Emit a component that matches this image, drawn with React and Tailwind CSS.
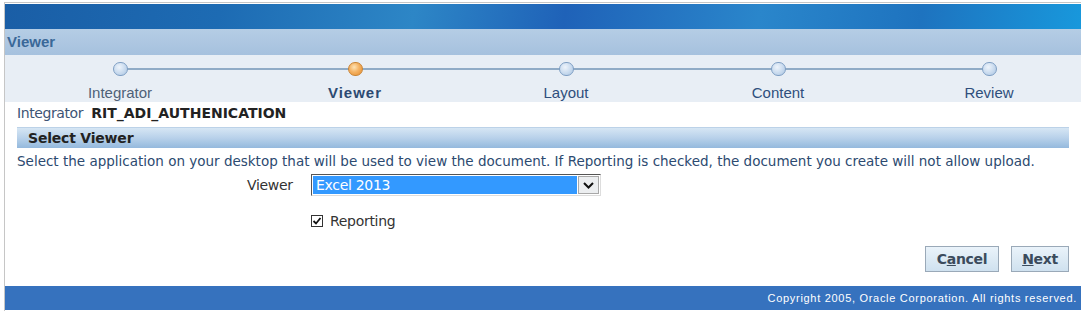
import React from "react";

const tahoma = { fontFamily: '"DejaVu Sans", Verdana, sans-serif' };

function Circle({ active }) {
  return active ? (
    <div className="w-[15px] h-[15px] rounded-full border border-[#c98536] bg-[radial-gradient(circle_at_40%_35%,#fde3b5_0%,#f4b263_45%,#e58c2c_100%)] relative z-10" />
  ) : (
    <div className="w-[15px] h-[15px] rounded-full border border-[#7f9fc4] bg-[radial-gradient(circle_at_40%_35%,#eef4fb_0%,#c8daee_55%,#a9c3e0_100%)] relative z-10" />
  );
}

function Step({ label, active, dim, className }) {
  return (
    <div className={`w-[150px] flex flex-col items-center ${className}`}>
      <Circle active={active} />
      <div
        className={`mt-[8px] text-[15px] leading-[18px] font-['Liberation_Sans',Arial,sans-serif] ${
          active
            ? "font-bold text-[#2c4a72] tracking-[1px]"
            : dim
            ? "text-[#4f6178]"
            : "text-[#2f4e7c]"
        }`}
      >
        {label}
      </div>
    </div>
  );
}

export default function App() {
  return (
    <div className="w-[1085px] h-[314px] bg-white overflow-hidden">
      <div className="mt-[2px] ml-[4px] w-[1077px] border-t border-l border-[#c6c6c6] h-[309px] flex flex-col">
        <div className="h-[1px] bg-white" />
        {/* banner */}
        <div className="h-[25px] bg-[linear-gradient(100deg,#1a5ea6_0%,#1d6bb3_20%,#2d86c6_38%,#1f62b8_52%,#2a86cb_70%,#1e73bf_85%,#1898dc_100%)]" />
        {/* title */}
        <div className="h-[26px] bg-[linear-gradient(180deg,#b5cde5_0%,#a6c1de_100%)] flex items-center pl-[2px]">
          <span className="text-[15px] font-bold text-[#3a6898] font-['Liberation_Sans',Arial,sans-serif]">Viewer</span>
        </div>
        {/* train */}
        <div className="h-[47px] bg-[#e8eef5] relative pt-[7px] flex">
          <div className="absolute left-[116px] w-[870px] top-[13px] h-[2px] bg-[#90abc6]" />
          <Step label="Integrator" dim className="ml-[40px]" />
          <Step label="Viewer" active className="ml-[85px]" />
          <Step label="Layout" className="ml-[61px]" />
          <Step label="Content" className="ml-[62px]" />
          <Step label="Review" className="ml-[61px]" />
        </div>
        {/* integrator row */}
        <div className="h-[22px] flex items-center pl-[12px] text-[14px]" style={tahoma}>
          <span className="text-[#3d5474] tracking-[-0.4px]">Integrator</span>
          <span className="ml-[8px] font-bold text-[#222] tracking-[0px]">RIT_ADI_AUTHENICATION</span>
        </div>
        <div className="mt-[3px] ml-[12px] w-[1052px] h-[21px] bg-[linear-gradient(180deg,#d6e6f4_0%,#b8d1ea_50%,#94b9dd_100%)] border-t border-[#bcd2e8] flex items-center pl-[11px]">
          <span className="text-[14px] font-bold text-[#222] tracking-[-0.2px]" style={tahoma}>Select Viewer</span>
        </div>
        <div className="ml-[12px] mt-[3px] h-[20px] text-[13.5px] leading-[20px] text-[#2c4a70] tracking-[0px] whitespace-nowrap" style={tahoma}>
          Select the application on your desktop that will be used to view the document. If Reporting is checked, the document you create will not allow upload.
        </div>
        {/* viewer select */}
        <div className="mt-[3px] flex items-center h-[22px]">
          <span className="ml-[242px] w-[50px] text-[14px] text-[#333] tracking-[-0.3px]" style={tahoma}>Viewer</span>
          <div className="ml-[14px] w-[290px] h-[22px] border border-[#555] border-r-[#ddd] border-b-[#ddd] bg-white flex items-stretch p-[1px]">
            <div className="flex-1 bg-[#3399ff] text-white text-[14px] leading-[18px] pl-[3px] tracking-[-0.3px]" style={tahoma}>
              Excel 2013
            </div>
            <div className="w-[21px] ml-[1px] bg-[#eceef0] border border-[#a8a8a8] flex items-center justify-center">
              <svg width="11" height="7" viewBox="0 0 11 7">
                <path d="M1 1 L5.5 5.5 L10 1" fill="none" stroke="#111" strokeWidth="2" />
              </svg>
            </div>
          </div>
        </div>
        {/* checkbox */}
        <div className="mt-[16px] flex items-center h-[18px]">
          <div className="ml-[306px] w-[12px] h-[12px] border border-[#333] bg-white flex items-center justify-center">
            <svg width="10" height="10" viewBox="0 0 10 10">
              <path d="M1.5 5 L4 7.5 L8.5 2" fill="none" stroke="#111" strokeWidth="1.8" />
            </svg>
          </div>
          <span className="ml-[7px] text-[14px] text-[#333] tracking-[-0.3px]" style={tahoma}>Reporting</span>
        </div>
        {/* buttons */}
        <div className="mt-[16px] flex justify-end pr-[12px] gap-[12px] h-[26px]">
          <button className="w-[74px] h-[26px] border border-[#9aa9b8] bg-[linear-gradient(180deg,#eaf3fa_0%,#cfe1ef_100%)] text-[14px] font-bold text-[#3b4b5c] tracking-[-0.3px]" style={tahoma}>
            C<span className="underline">a</span>ncel
          </button>
          <button className="w-[58px] h-[26px] border border-[#9aa9b8] bg-[linear-gradient(180deg,#eaf3fa_0%,#cfe1ef_100%)] text-[14px] font-bold text-[#3b4b5c] tracking-[-0.3px]" style={tahoma}>
            <span className="underline">N</span>ext
          </button>
        </div>
        {/* footer */}
        <div className="mt-[14px] h-[24px] bg-[#3672be] flex items-center justify-end pr-[4px]">
          <span className="text-[11px] text-white tracking-[0.7px] font-['Liberation_Sans',Arial,sans-serif]">
            Copyright 2005, Oracle Corporation. All rights reserved.
          </span>
        </div>
      </div>
    </div>
  );
}
